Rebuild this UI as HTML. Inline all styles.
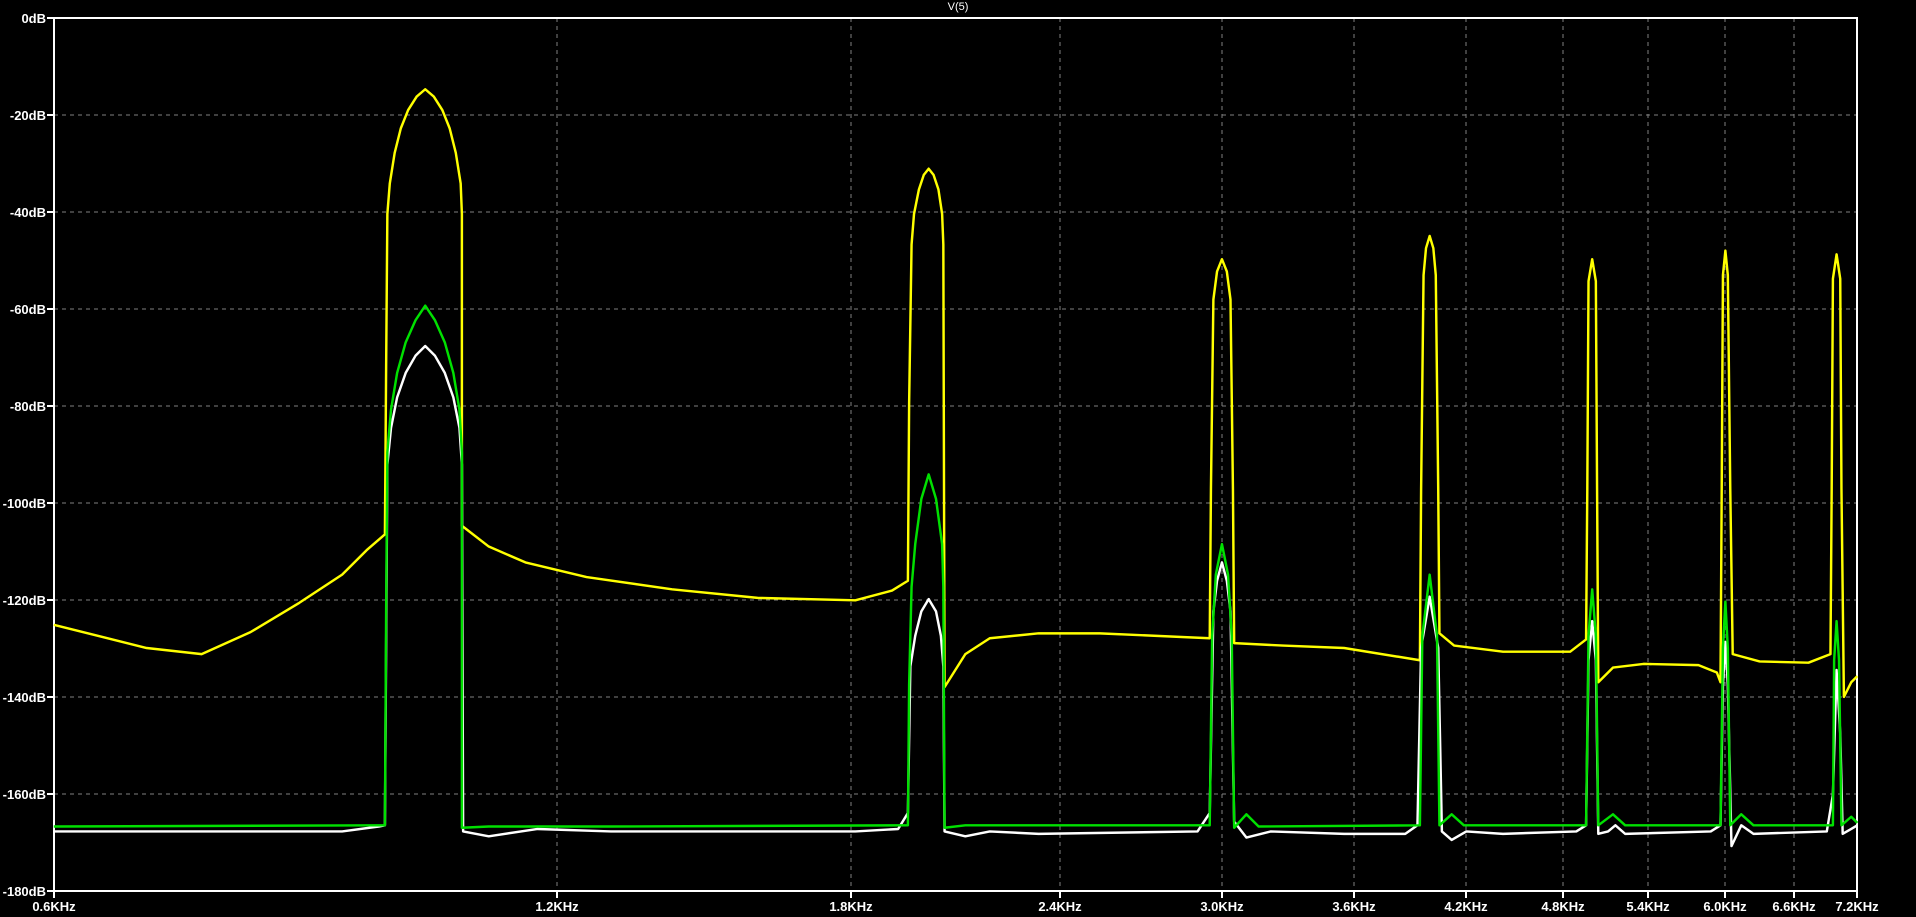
<!DOCTYPE html>
<html><head><style>
html,body{margin:0;padding:0;background:#000;overflow:hidden}
body{width:1916px;height:917px;position:relative;font-family:"Liberation Sans",sans-serif;font-weight:bold;color:#fff}
.yl{position:absolute;right:1870px;font-size:13px;line-height:13px;text-align:right;white-space:nowrap}
.xl{position:absolute;top:899px;font-size:13px;width:80px;text-align:center;margin-left:-40px}
</style></head><body>
<svg style="position:absolute;left:0;top:0" width="1916" height="917">
<g stroke="#808080" stroke-width="1" stroke-dasharray="4,4">
<line x1="54" x2="1857" y1="115" y2="115"/><line x1="54" x2="1857" y1="212" y2="212"/><line x1="54" x2="1857" y1="309" y2="309"/><line x1="54" x2="1857" y1="406" y2="406"/><line x1="54" x2="1857" y1="503" y2="503"/><line x1="54" x2="1857" y1="600" y2="600"/><line x1="54" x2="1857" y1="697" y2="697"/><line x1="54" x2="1857" y1="794" y2="794"/>
<line y1="18" y2="891" x1="557" x2="557"/><line y1="18" y2="891" x1="851" x2="851"/><line y1="18" y2="891" x1="1060" x2="1060"/><line y1="18" y2="891" x1="1222" x2="1222"/><line y1="18" y2="891" x1="1354" x2="1354"/><line y1="18" y2="891" x1="1466" x2="1466"/><line y1="18" y2="891" x1="1563" x2="1563"/><line y1="18" y2="891" x1="1648" x2="1648"/><line y1="18" y2="891" x1="1725" x2="1725"/><line y1="18" y2="891" x1="1794" x2="1794"/>
</g>
<rect x="54" y="18" width="1803" height="873" fill="none" stroke="#fff" stroke-width="2"/>
<g stroke="#fff" stroke-width="2">
<line x1="47" x2="54" y1="18" y2="18"/><line x1="47" x2="54" y1="115" y2="115"/><line x1="47" x2="54" y1="212" y2="212"/><line x1="47" x2="54" y1="309" y2="309"/><line x1="47" x2="54" y1="406" y2="406"/><line x1="47" x2="54" y1="503" y2="503"/><line x1="47" x2="54" y1="600" y2="600"/><line x1="47" x2="54" y1="697" y2="697"/><line x1="47" x2="54" y1="794" y2="794"/><line x1="47" x2="54" y1="891" y2="891"/>
<line y1="891" y2="898" x1="54" x2="54"/><line y1="891" y2="898" x1="557" x2="557"/><line y1="891" y2="898" x1="851" x2="851"/><line y1="891" y2="898" x1="1060" x2="1060"/><line y1="891" y2="898" x1="1222" x2="1222"/><line y1="891" y2="898" x1="1354" x2="1354"/><line y1="891" y2="898" x1="1466" x2="1466"/><line y1="891" y2="898" x1="1563" x2="1563"/><line y1="891" y2="898" x1="1648" x2="1648"/><line y1="891" y2="898" x1="1725" x2="1725"/><line y1="891" y2="898" x1="1794" x2="1794"/><line y1="891" y2="898" x1="1857" x2="1857"/>
</g>
</svg>
<svg style="position:absolute;left:0;top:0" width="1916" height="917" viewBox="0 0 1568 750" preserveAspectRatio="none">
<g fill="none" stroke-width="2" stroke-linejoin="round">
<polyline stroke="#ffff00" points="44,511 120,530 165,535 205,517 245,493 280,470 300,450 315,437 316,300 317,175 319,150 323,125 328,105 334,90 341,79 348,73 355,79 362,90 368,105 373,125 377,150 378,175 378,430 400,447 430,460 480,472 550,482 620,489 700,491 730,483 743,475 744,330 746,200 748,175 752,155 756,143 760,138 764,143 768,155 771,175 772,200 773,562 790,535 810,522 850,518 900,518 990,522 991,400 993,245 996,222 1000,212 1004,222 1007,245 1009,400 1010,526 1050,528 1100,530 1162,540 1163,400 1165,225 1167,203 1170,193 1173,203 1175,225 1177,400 1178,518 1190,528 1230,533 1285,533 1298,523 1299,400 1300,230 1303,212 1306,230 1307,400 1308,558 1320,546 1345,543 1390,544 1405,550 1408,558 1409,400 1410,225 1412,205 1414,225 1416,400 1418,535 1440,541 1480,542 1498,535 1499,400 1500,228 1503,208 1506,228 1507,400 1509,570 1515,558 1520,553"/>
<polyline stroke="#ffffff" points="44,680 280,680 310,676 315,675 317,380 320,350 325,325 332,305 340,291 348,283 356,291 364,305 371,325 376,350 378,380 379,680 400,684 440,678 500,680 600,680 700,680 735,678 743,665 745,545 749,520 754,500 760,490 766,500 770,520 772,545 773,680 790,684 810,680 850,682 980,680 990,665 993,500 996,475 1000,460 1004,475 1007,500 1010,672 1020,685 1040,680 1100,682 1150,682 1160,675 1163,530 1170,488 1177,530 1180,680 1188,687 1200,680 1230,682 1290,680 1298,675 1300,540 1303,508 1306,540 1308,682 1316,680 1322,675 1330,682 1400,680 1408,675 1410,560 1412,525 1414,560 1417,692 1425,675 1435,682 1495,680 1500,650 1503,548 1506,600 1508,682 1515,678 1520,675"/>
<polyline stroke="#00e000" points="44,676 315,675 316,500 317,370 320,335 325,305 332,280 340,262 348,250 356,262 364,280 371,305 376,335 378,370 378,677 400,676 500,676 743,675 744,560 746,480 749,445 754,408 760,388 766,408 771,445 772,480 773,677 790,675 990,675 992,520 995,470 1000,445 1005,470 1008,520 1010,677 1020,666 1030,676 1162,675 1164,520 1170,470 1176,520 1178,675 1188,666 1198,675 1298,675 1300,520 1303,482 1306,520 1308,675 1320,666 1330,675 1408,675 1410,530 1412,492 1414,530 1416,675 1425,666 1435,675 1500,675 1501,540 1503,508 1505,540 1507,675 1515,668 1520,673"/>
</g>
</svg>
<div style="position:absolute;top:1px;left:0;width:1916px;text-align:center;font-size:11px;font-weight:normal">V(5)</div>
<div class="yl" style="top:12px">0dB</div>
<div class="yl" style="top:109px">-20dB</div>
<div class="yl" style="top:206px">-40dB</div>
<div class="yl" style="top:303px">-60dB</div>
<div class="yl" style="top:400px">-80dB</div>
<div class="yl" style="top:497px">-100dB</div>
<div class="yl" style="top:594px">-120dB</div>
<div class="yl" style="top:691px">-140dB</div>
<div class="yl" style="top:788px">-160dB</div>
<div class="yl" style="top:885px">-180dB</div>
<div class="xl" style="left:54px">0.6KHz</div>
<div class="xl" style="left:557px">1.2KHz</div>
<div class="xl" style="left:851px">1.8KHz</div>
<div class="xl" style="left:1060px">2.4KHz</div>
<div class="xl" style="left:1222px">3.0KHz</div>
<div class="xl" style="left:1354px">3.6KHz</div>
<div class="xl" style="left:1466px">4.2KHz</div>
<div class="xl" style="left:1563px">4.8KHz</div>
<div class="xl" style="left:1648px">5.4KHz</div>
<div class="xl" style="left:1725px">6.0KHz</div>
<div class="xl" style="left:1794px">6.6KHz</div>
<div class="xl" style="left:1857px">7.2KHz</div>
</body></html>
